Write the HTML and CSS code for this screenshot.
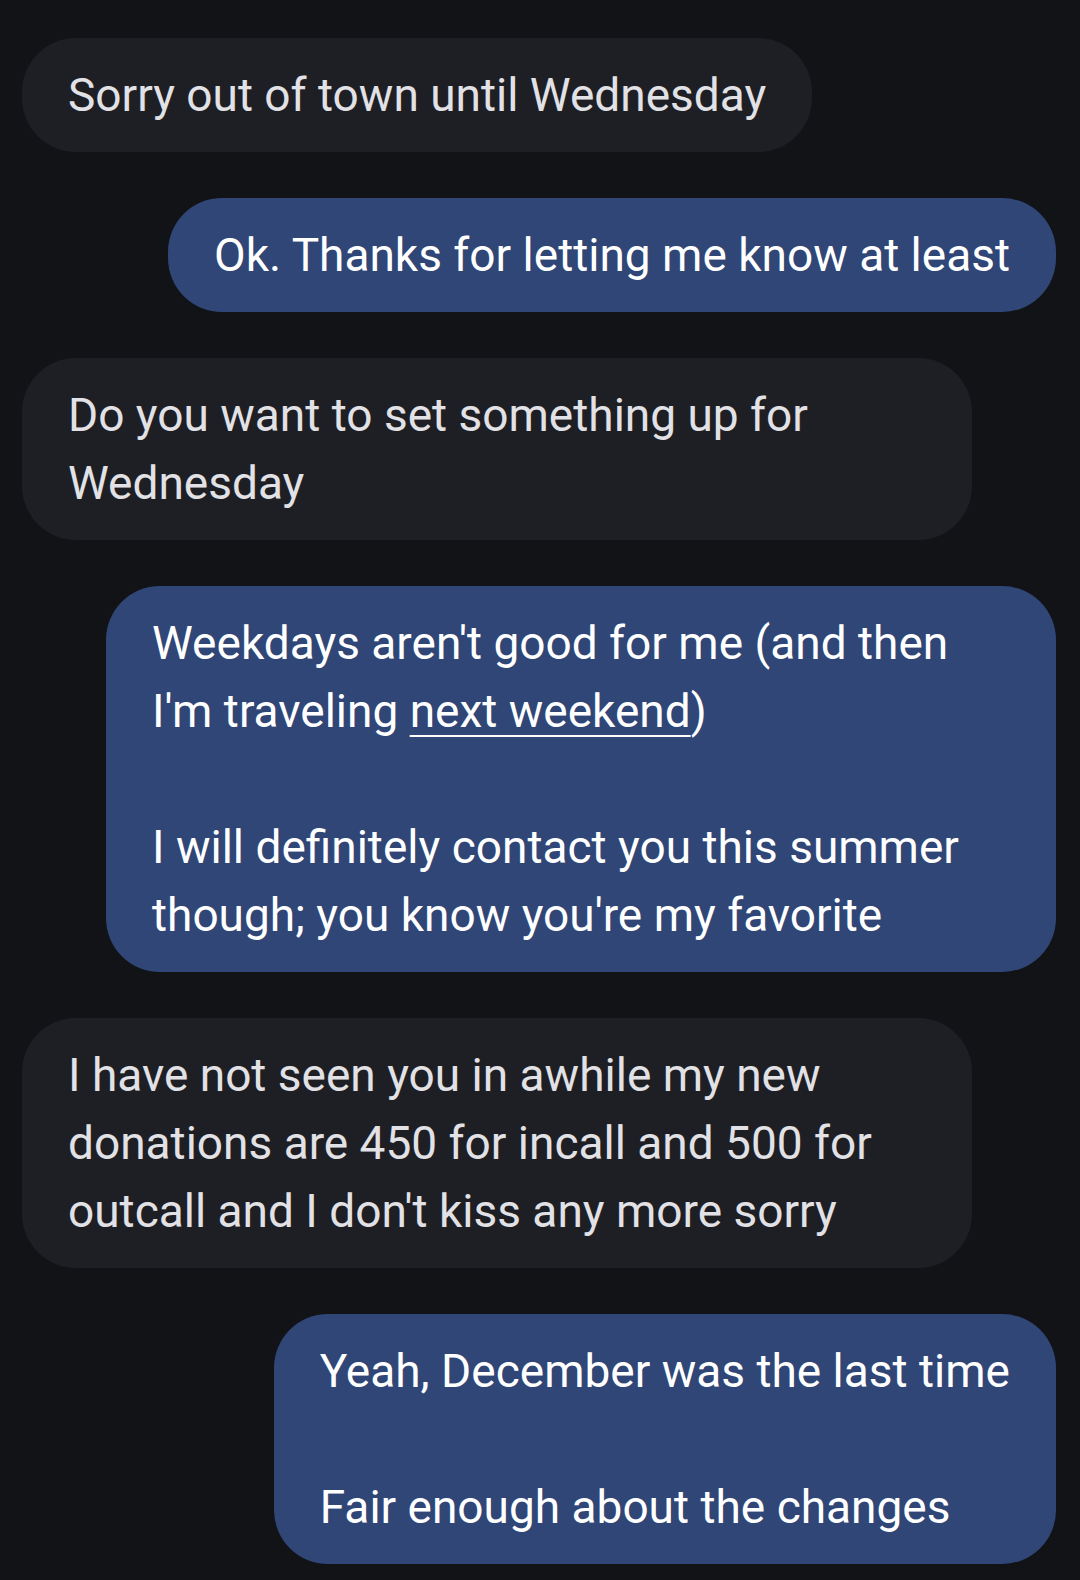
FILE: index.html
```html
<!DOCTYPE html>
<html lang="en">
<head>
  <meta charset="UTF-8">
  <meta name="viewport" content="width=device-width, initial-scale=1.0">
  <title>Messages</title>
  <link rel="stylesheet" href="styles.css">
</head>
<body>
  <div id="thread">
    <div class="msg msg-in">Sorry out of town until Wednesday</div>
    <div class="msg msg-out">Ok. Thanks for letting me know at least</div>
    <div class="msg msg-in">Do you want to set something up for Wednesday</div>
    <div class="msg msg-out">Weekdays aren't good for me (and then I'm traveling <span class="link">next weekend</span>)

I will definitely contact you this summer though; you know you're my favorite</div>
    <div class="msg msg-in">I have not seen you in awhile my new donations are 450 for incall and 500 for outcall and I don't kiss any more sorry</div>
    <div class="msg msg-out">Yeah, December was the last time

Fair enough about the changes</div>
  </div>
</body>
</html>
```

FILE: styles.css
```css
body {
  margin: 0;
  background-color: #121317;
  font-family: Roboto, "Noto Sans", sans-serif;
}

#thread {
  display: flex;
  flex-direction: column;
  gap: 46px;
  padding: 38px 24px 0 22px;
}

.msg {
  max-width: 858px;
  padding: 23px 46px;
  border-radius: 54px;
  font-size: 46px;
  line-height: 68px;
  white-space: pre-line;
}

.msg-in {
  align-self: flex-start;
  background-color: #1e1f24;
  color: #e2e2e6;
}

.msg-out {
  align-self: flex-end;
  background-color: #2f4677;
  color: #ffffff;
}

.link {
  text-decoration: underline;
  text-decoration-thickness: 2px;
  text-underline-offset: 8px;
}
```
